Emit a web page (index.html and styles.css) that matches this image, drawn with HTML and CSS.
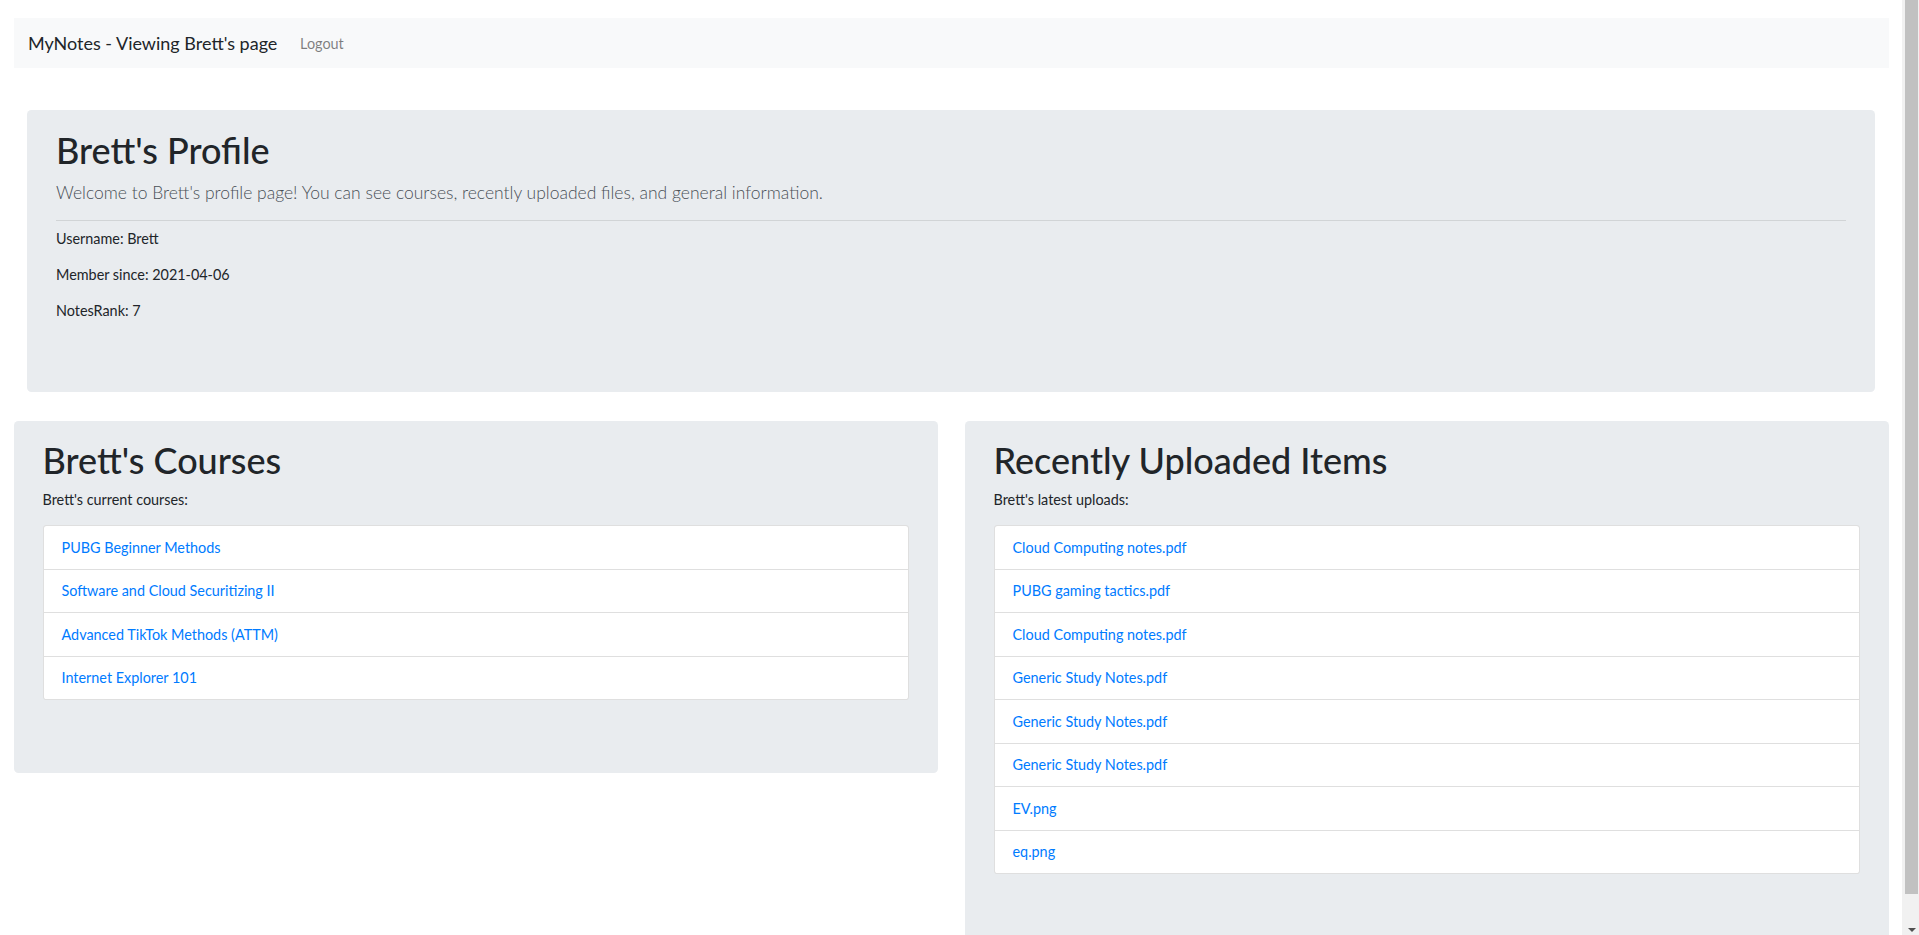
FILE: index.html
```html
<!DOCTYPE html>
<html lang="en">
<head>
<meta charset="utf-8">
<title>MyNotes - Brett's page</title>
<link rel="stylesheet" href="styles.css">
</head>
<body>
<div class="page">
  <nav class="navbar">
    <a class="navbar-brand" href="#">MyNotes - Viewing Brett's page</a>
    <a class="nav-link" href="#">Logout</a>
  </nav>

  <div class="profile-wrap">
    <section class="jumbotron profile">
      <h1 class="title">Brett's Profile</h1>
      <p class="lead">Welcome to Brett's profile page! You can see courses, recently uploaded files, and general information.</p>
      <hr class="divider">
      <p class="info">Username: Brett</p>
      <p class="info">Member since: 2021-04-06</p>
      <p class="info">NotesRank: 7</p>
    </section>
  </div>

  <div class="columns">
    <section class="jumbotron panel">
      <h1 class="title">Brett's Courses</h1>
      <p class="info">Brett's current courses:</p>
      <ul class="list-group">
        <li class="list-item"><a href="#">PUBG Beginner Methods</a></li>
        <li class="list-item"><a href="#">Software and Cloud Securitizing II</a></li>
        <li class="list-item"><a href="#">Advanced TikTok Methods (ATTM)</a></li>
        <li class="list-item"><a href="#">Internet Explorer 101</a></li>
      </ul>
    </section>
    <section class="jumbotron panel">
      <h1 class="title">Recently Uploaded Items</h1>
      <p class="info">Brett's latest uploads:</p>
      <ul class="list-group">
        <li class="list-item"><a href="#">Cloud Computing notes.pdf</a></li>
        <li class="list-item"><a href="#">PUBG gaming tactics.pdf</a></li>
        <li class="list-item"><a href="#">Cloud Computing notes.pdf</a></li>
        <li class="list-item"><a href="#">Generic Study Notes.pdf</a></li>
        <li class="list-item"><a href="#">Generic Study Notes.pdf</a></li>
        <li class="list-item"><a href="#">Generic Study Notes.pdf</a></li>
        <li class="list-item"><a href="#">EV.png</a></li>
        <li class="list-item"><a href="#">eq.png</a></li>
      </ul>
    </section>
  </div>
</div>
<div class="scrollbar">
  <div class="scroll-thumb"></div>
  <div class="scroll-track">
    <span class="scroll-arrow"></span>
  </div>
</div>
</body>
</html>
```

FILE: styles.css
```css
* { box-sizing: border-box; }

html, body {
  height: 100%;
  overflow: hidden;
}

body {
  margin: 0;
  display: flex;
  background: #fff;
  color: #212529;
  font-family: "Lato", "Liberation Sans", sans-serif;
  font-size: 14.4px;
  line-height: 1.5;
}

a { color: #007bff; text-decoration: none; }

.page {
  flex: 1;
  min-width: 0;
  padding: 18px 13.5px 0;
}

/* navbar */
.navbar {
  display: flex;
  align-items: center;
  height: 50px;
  padding: 0 14.4px;
  background: #f8f9fa;
}
.navbar-brand {
  color: #212529;
  font-size: 18px;
  line-height: 27px;
  margin-right: 15.5px;
}
.nav-link {
  color: rgba(0, 0, 0, 0.5);
  font-size: 14.4px;
  padding: 2px 7.2px 0;
}

/* jumbotrons */
.profile-wrap {
  padding: 42px 13.5px 0;
}
.jumbotron {
  background: #e9ecef;
  border-radius: 4.5px;
  padding: 19px 29px 56px;
}
.title {
  margin: 0 0 7.2px;
  font-size: 36px;
  line-height: 43.2px;
  font-weight: 500;
}
.lead {
  margin: 0;
  font-size: 17.5px;
  line-height: 27px;
  font-weight: 300;
  color: #495057;
}
.divider {
  margin: 13.5px 0 7px;
  border: 0;
  border-top: 1px solid rgba(0, 0, 0, 0.1);
}
.info {
  margin: 0 0 14.4px;
}

/* two columns */
.columns {
  margin-top: 29px;
  display: grid;
  grid-template-columns: 1fr 1fr;
  column-gap: 27px;
  align-items: start;
}
.panel {
  padding: 18px 29px 58.6px;
}

.list-group {
  list-style: none;
  margin: 0 0 14.4px;
  padding: 0;
  background: #fff;
  border: 1px solid rgba(0, 0, 0, 0.125);
  border-radius: 3.6px;
}
.list-item {
  padding: 10.45px 18px;
  line-height: 21.6px;
  border-top: 1px solid rgba(0, 0, 0, 0.125);
}
.list-item:first-child { border-top: 0; }

/* fake window scrollbar */
.scrollbar {
  width: 17px;
  flex: none;
  display: flex;
  flex-direction: column;
  background: #f1f1f1;
  padding: 0 1px 0 3px;
}
.scroll-thumb {
  height: 894px;
  background: #c1c1c1;
}
.scroll-track {
  flex: 1;
  display: flex;
  align-items: flex-end;
  justify-content: center;
  padding-bottom: 3px;
}
.scroll-arrow {
  width: 0;
  height: 0;
  border-left: 4px solid transparent;
  border-right: 4px solid transparent;
  border-top: 4px solid #505050;
}
```
